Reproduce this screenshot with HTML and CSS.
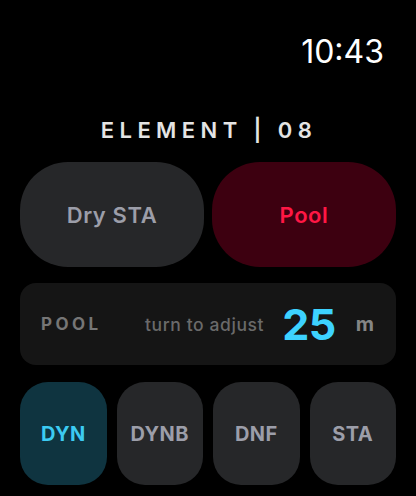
FILE: index.html
```html
<!DOCTYPE html>
<html>
<head>
<meta charset="utf-8">
<link rel="stylesheet" href="styles.css">
</head>
<body>
<div class="screen">
  <div class="status"><span class="time">10:43</span></div>
  <div class="title">ELEMENT | 08</div>
  <div class="modes">
    <div class="mode">Dry STA</div>
    <div class="mode mode-pool">Pool</div>
  </div>
  <div class="panel">
    <span class="panel-label">POOL</span>
    <span class="panel-hint">turn to adjust</span>
    <span class="panel-value">25</span>
    <span class="panel-unit">m</span>
  </div>
  <div class="disciplines">
    <div class="disc disc-active">DYN</div>
    <div class="disc">DYNB</div>
    <div class="disc">DNF</div>
    <div class="disc">STA</div>
  </div>
</div>
</body>
</html>
```
FILE: styles.css
```css
html, body {
  margin: 0;
  padding: 0;
  background: #000;
}
body {
  width: 416px;
  height: 496px;
  overflow: hidden;
  font-family: Inter, "Liberation Sans", sans-serif;
  color: #fff;
}
.screen {
  display: flex;
  flex-direction: column;
  padding: 0 20px;
}
.status {
  display: flex;
  justify-content: flex-end;
  padding-top: 34px;
  padding-right: 12px;
  height: 40px;
}
.time {
  font-size: 32px;
  line-height: 36px;
  font-weight: 400;
  color: #fff;
}
.title {
  margin-top: 43px;
  text-align: center;
  font-size: 22px;
  line-height: 26px;
  font-weight: 600;
  letter-spacing: 5.4px;
  color: #e4e4e4;
  padding-left: 2px;
}
.modes {
  margin-top: 19px;
  display: flex;
  gap: 8px;
}
.mode {
  flex: 1;
  height: 105px;
  border-radius: 48px;
  background: #262729;
  display: flex;
  align-items: center;
  justify-content: center;
  font-size: 22px;
  font-weight: 600;
  letter-spacing: 0.6px;
  color: #9c9ea9;
}
.mode-pool {
  background: #3d0010;
  color: #ff1744;
}
.panel {
  margin-top: 16px;
  height: 82px;
  border-radius: 16px;
  background: #151515;
  display: flex;
  align-items: center;
  padding: 0 22px 0 21px;
}
.panel-label {
  font-size: 17px;
  font-weight: 700;
  letter-spacing: 3.4px;
  color: #767676;
}
.panel-hint {
  margin-left: auto;
  font-size: 17.5px;
  font-weight: 500;
  color: #6a6a6a;
  letter-spacing: 0.6px;
}
.panel-value {
  margin-left: 18px;
  font-size: 43px;
  font-weight: 700;
  color: #3dd2ff;
  letter-spacing: -0.5px;
}
.panel-unit {
  margin-left: 20px;
  font-size: 20px;
  font-weight: 700;
  color: #858585;
}
.disciplines {
  margin-top: 17px;
  display: flex;
  gap: 10px;
}
.disc {
  flex: 1;
  height: 103px;
  border-radius: 28px;
  background: #262729;
  display: flex;
  align-items: center;
  justify-content: center;
  font-size: 20px;
  font-weight: 700;
  letter-spacing: 0.4px;
  color: #9c9ea9;
}
.disc-active {
  background: #0f3440;
  color: #3ccbf2;
}
```
